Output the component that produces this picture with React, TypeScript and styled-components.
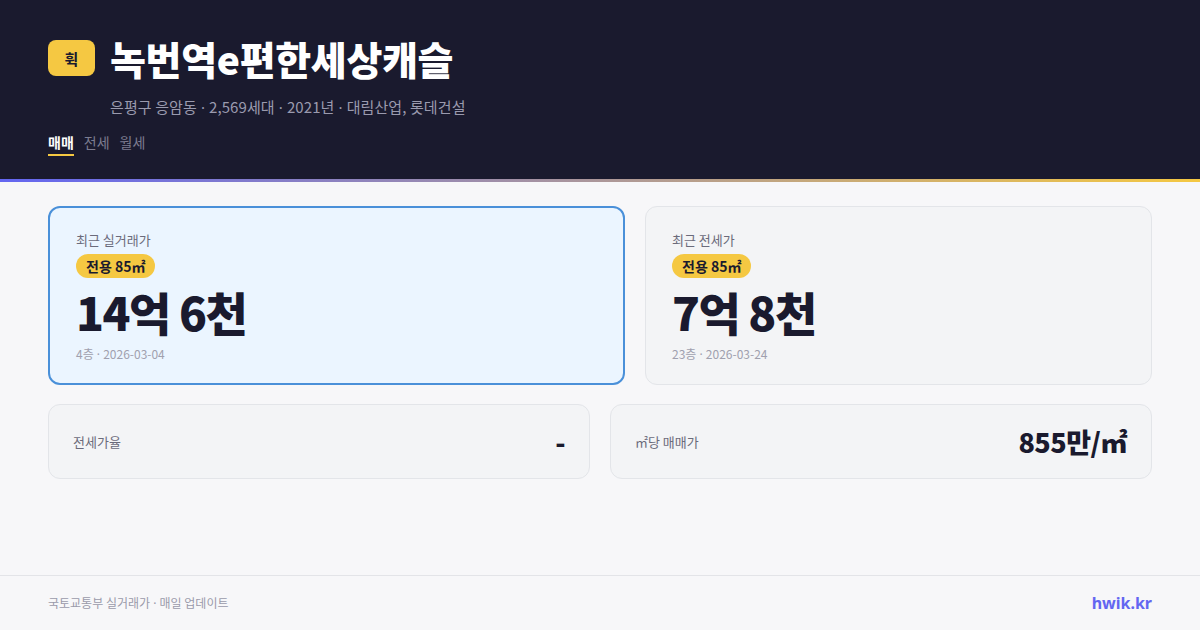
import * as React from "react";
import styled, { createGlobalStyle } from "styled-components";

const GlobalStyle = createGlobalStyle`
  html, body {
    margin: 0;
    padding: 0;
    background: #f7f7f9;
    font-family: "Noto Sans CJK KR", "Noto Sans", sans-serif;
  }
`;

const Page = styled.div`
  width: 1200px;
  height: 630px;
  display: flex;
  flex-direction: column;
  background: #f7f7f9;
  overflow: hidden;
`;

const Header = styled.header`
  background: #1a1a2e;
  padding: 29px 48px 0;
  height: 182px;
  box-sizing: border-box;
  border-bottom: 3px solid transparent;
  border-image: linear-gradient(90deg, #6366f1, #f5c842) 1;
`;

const TitleRow = styled.div`
  display: flex;
  align-items: center;
  gap: 15px;
`;

const Logo = styled.div`
  width: 47px;
  height: 36px;
  border-radius: 8px;
  background: #f5c842;
  color: #1a1a2e;
  font-size: 15px;
  font-weight: 700;
  display: flex;
  align-items: center;
  justify-content: center;
`;

const Title = styled.h1`
  margin: 0;
  color: #ffffff;
  font-size: 39px;
  font-weight: 900;
  letter-spacing: -0.3px;
  line-height: 58px;
`;

const Subtitle = styled.div`
  margin: 10px 0 0 62px;
  color: #9a9aae;
  font-size: 15px;
  letter-spacing: 0.1px;
  line-height: 20px;
`;

const Sep = styled.span`
  font-family: "Noto Sans", sans-serif;
`;

const Tabs = styled.nav`
  display: flex;
  gap: 10px;
  margin-top: 15px;
`;

const Tab = styled.span<{ $active?: boolean }>`
  font-size: 14px;
  line-height: 20px;
  padding-bottom: 2px;
  font-weight: ${(p) => (p.$active ? 700 : 400)};
  color: ${(p) => (p.$active ? "#ffffff" : "#7c7c90")};
  border-bottom: 2px solid ${(p) => (p.$active ? "#f5c842" : "transparent")};
`;

const Main = styled.main`
  flex: 1;
  padding: 24px 48px 0;
  display: flex;
  flex-direction: column;
  gap: 19px;
`;

const TopRow = styled.div`
  display: grid;
  grid-template-columns: 577fr 507fr;
  gap: 20px;
`;

const PriceCard = styled.div<{ $highlight?: boolean }>`
  height: 179px;
  box-sizing: border-box;
  border-radius: 12px;
  padding: ${(p) => (p.$highlight ? "23px 26px" : "24px 26px")};
  background: ${(p) => (p.$highlight ? "#ebf5ff" : "#f3f4f6")};
  border: ${(p) => (p.$highlight ? "2px solid #4a90d9" : "1px solid #e3e5e9")};
  display: flex;
  flex-direction: column;
  align-items: flex-start;
`;

const CardLabel = styled.div`
  font-size: 13px;
  color: #6b6b7b;
  line-height: 18px;
`;

const SizeBadge = styled.span`
  margin-top: 5px;
  background: #f5c842;
  color: #1a1a2e;
  font-size: 14px;
  font-weight: 700;
  line-height: 24px;
  padding: 0 10px;
  border-radius: 12px;
`;

const Price = styled.div`
  margin-top: 4px;
  font-size: 46px;
  font-weight: 900;
  color: #1a1a2e;
  letter-spacing: -1.5px;
  line-height: 58px;
`;

const Meta = styled.div`
  margin-top: 6px;
  font-size: 12px;
  color: #a0a0ae;
  line-height: 16px;
`;

const BottomRow = styled.div`
  display: grid;
  grid-template-columns: 1fr 1fr;
  gap: 20px;
`;

const StatCard = styled.div`
  height: 75px;
  box-sizing: border-box;
  border-radius: 12px;
  background: #f3f4f6;
  border: 1px solid #e3e5e9;
  padding: 0 24px;
  display: flex;
  align-items: center;
  justify-content: space-between;
`;

const StatLabel = styled.span`
  font-size: 13px;
  color: #6b6b7b;
`;

const StatValue = styled.span`
  font-size: 27px;
  font-weight: 800;
  color: #1a1a2e;
  letter-spacing: -0.5px;
`;

const Footer = styled.footer`
  height: 54px;
  border-top: 1px solid #e3e4e8;
  padding: 0 48px;
  display: flex;
  align-items: center;
  justify-content: space-between;
`;

const Source = styled.span`
  font-size: 12px;
  color: #9a9aaa;
`;

const Brand = styled.span`
  font-family: "Noto Sans", sans-serif;
  font-size: 16px;
  font-weight: 700;
  color: #6366f1;
`;

const dot = <Sep> · </Sep>;

export default function App() {
  return (
    <Page>
      <GlobalStyle />
      <Header>
        <TitleRow>
          <Logo>휙</Logo>
          <Title>녹번역e편한세상캐슬</Title>
        </TitleRow>
        <Subtitle>
          은평구 응암동{dot}2,569세대{dot}2021년{dot}대림산업, 롯데건설
        </Subtitle>
        <Tabs>
          <Tab $active>매매</Tab>
          <Tab>전세</Tab>
          <Tab>월세</Tab>
        </Tabs>
      </Header>
      <Main>
        <TopRow>
          <PriceCard $highlight>
            <CardLabel>최근 실거래가</CardLabel>
            <SizeBadge>전용 85㎡</SizeBadge>
            <Price>14억 6천</Price>
            <Meta>4층{dot}2026-03-04</Meta>
          </PriceCard>
          <PriceCard>
            <CardLabel>최근 전세가</CardLabel>
            <SizeBadge>전용 85㎡</SizeBadge>
            <Price>7억 8천</Price>
            <Meta>23층{dot}2026-03-24</Meta>
          </PriceCard>
        </TopRow>
        <BottomRow>
          <StatCard>
            <StatLabel>전세가율</StatLabel>
            <StatValue>-</StatValue>
          </StatCard>
          <StatCard>
            <StatLabel>㎡당 매매가</StatLabel>
            <StatValue>855만/㎡</StatValue>
          </StatCard>
        </BottomRow>
      </Main>
      <Footer>
        <Source>국토교통부 실거래가{dot}매일 업데이트</Source>
        <Brand>hwik.kr</Brand>
      </Footer>
    </Page>
  );
}
